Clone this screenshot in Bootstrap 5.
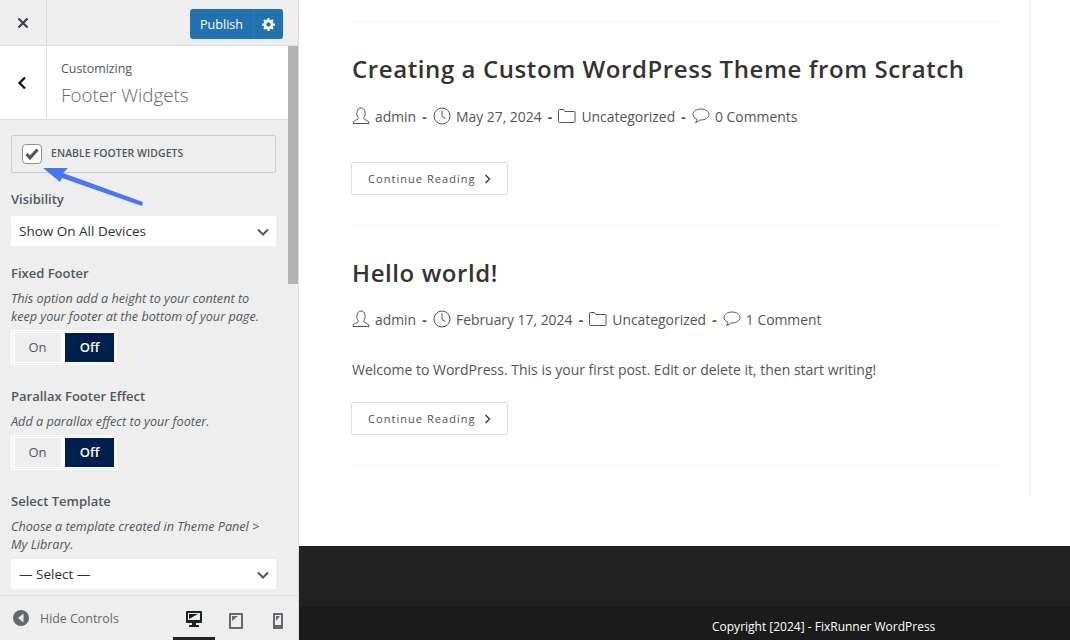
<!DOCTYPE html>
<html lang="en"><head><meta charset="utf-8"><title>Customizer</title>
<link href="https://cdn.jsdelivr.net/npm/bootstrap@5.3.0/dist/css/bootstrap.min.css" rel="stylesheet">
<style>
html,body{height:640px;overflow:hidden;background:#fff;font-family:"Open Sans",sans-serif}
.app{height:640px}
.side{width:299px;flex:none;background:#eee;border-right:1px solid #ddd;color:#50575e;position:relative}
.top{height:46px;border-bottom:1px solid #ddd}
.close-x{width:47px;border-right:1px solid #ddd;color:#3c434a}
.pub{margin:9px 15px 0 0;width:93px;height:30px;background:#2271b1;border-radius:3px;color:#fff;font-size:12.6px}
.pub span{flex:1;text-align:center;padding:2px 0 0 0}
.pub i{width:30px;display:flex;align-items:center;justify-content:center;border-left:1px solid #2a78b8;padding-right:1px}
.info{height:74px;background:#fff;border-bottom:1px solid #ddd;margin-right:10px}
.back{width:47px;border-right:1px solid #ddd;padding-right:2px}
.info .tx{padding-left:14px}
.info small{display:block;font-size:12.4px;color:#50575e;line-height:18px;margin-top:14px}
.info h2{font-size:18.8px;font-weight:300;color:#646970;line-height:27px;margin:4px 0 0}
.scroll{height:475px;overflow:hidden}
.thumb{width:10px;height:238px;background:#b3b3b3;position:absolute;right:0;top:46px}
.pane{width:265px;margin-left:11px;padding-top:15px}
.chk{height:38px;border:1px solid #ccc;border-radius:2px;padding-left:10px;font-size:10.4px;font-weight:600;letter-spacing:.1px;color:#50575e}
.box{width:20px;height:20px;border:1px solid #8c8f94;border-radius:4px;background:#fff;margin-right:9px}
.lbl{font-size:13px;font-weight:600;line-height:18px;color:#50575e}
.lv{margin-top:17px}.lf{margin-top:18px}.lp{margin-top:22px}
.desc{font-size:12.65px;font-style:italic;line-height:18px;color:#50575e;margin-top:7px}
.sel{height:30px;background:#fff;font-size:13.5px;color:#2c3338;padding:1px 7px 0 8px;margin-top:8px}
.sel.s2{margin-top:6px}
.tog{width:106px;height:35px;background:#fff;padding:3px 3px 3px 4px;margin-top:5px;font-size:13px;gap:4px;outline:1px dotted #e4e4e4;outline-offset:-2px}
.tog div{display:flex;align-items:center;justify-content:center}
.tog .on{background:#eee;color:#50575e;width:46px;padding-right:1px}
.tog .off{background:#001f4d;color:#fff;font-weight:600;width:49px}
.foot{height:45px;border-top:1px solid #ddd;font-size:12.4px;color:#646970;background:#eee}
.hide{margin-left:13px}.hide+span{margin-left:11px;padding-top:2px}
.dev{width:42px;height:44px;padding-top:5px}
.dev.act{border-bottom:3px solid #1d2327}
.devs{margin-right:-1px}
.arrow{position:absolute;left:38px;top:160px}
.main{flex:1;min-width:0}
.wrap{height:496px;width:732px;border-right:1px solid #f1f1f1;padding-left:52px}
.list{width:649px;padding-top:21px}
article{border-top:1px solid #f1f1f1}
article h3{font-size:24px;font-weight:600;color:#333;letter-spacing:.59px;line-height:34px;margin:0;padding-left:1px}
.meta{font-size:13.9px;color:#555;gap:5px;height:20px;margin-top:21px;padding-left:1px}
.a2 .meta{margin-top:20px}
.meta svg{margin-bottom:3px}
.meta b{font-weight:700;color:#555;margin:0 1.2px}
.rd{width:157px;height:33px;border:1px solid #ddd;border-radius:2px;font-size:11px;letter-spacing:1.05px;color:#555;padding:1px 0 0 16px;gap:8px}
.a1{padding-top:30px;height:204px}
.a2{padding-top:30px;height:241px;border-bottom:1px solid #f1f1f1}
.a1 .rd{margin-top:35px}
.txt{font-size:14px;color:#555;line-height:20px;margin:30px 0 0;padding-left:1px}
.a2 .rd{margin-top:22px}
.fw{height:60px;background:#222;margin-top:50px}
.fc{height:34px;background:#1b1b1b;color:#fff;font-size:12px;padding-left:413px;line-height:41px;font-weight:500}
</style></head><body>
<div class="app d-flex">
<aside class="side d-flex flex-column">
 <div class="top d-flex justify-content-between">
  <div class="close-x d-flex align-items-center justify-content-center"><svg width="12" height="12" viewBox="0 0 12 12"><path d="M1.500 1.500l9 9M10.500 1.500l-9 9" stroke="currentColor" stroke-width="2.200"/></svg></div>
  <div class="pub d-flex align-items-stretch"><span class="align-self-center">Publish</span><i><svg width="15" height="15" viewBox="-.5 .5 20 20"><path fill="#fff" d="M18 12h-2.180c-.17.7-.44 1.350-.81 1.930l1.540 1.540-2.100 2.100-1.540-1.540c-.58.360-1.230.630-1.910.790V19H8v-2.180c-.68-.16-1.330-.43-1.910-.79l-1.540 1.540-2.120-2.120 1.540-1.540c-.36-.58-.63-1.230-.79-1.910H1V9.030h2.170c.16-.7.440-1.350.8-1.940L2.430 5.550l2.100-2.100 1.540 1.540c.58-.37 1.240-.64 1.930-.81V2h3v2.180c.68.160 1.330.430 1.910.790l1.540-1.540 2.120 2.120-1.540 1.540c.36.590.64 1.240.8 1.940H18V12zm-8.500 1.500c1.660 0 3-1.340 3-3s-1.340-3-3-3-3 1.340-3 3 1.340 3 3 3z"/></svg></i></div>
 </div>
 <div class="info d-flex">
  <div class="back d-flex align-items-center justify-content-center"><svg width="10" height="14" viewBox="0 0 10 14"><path d="M8 1.500L2.500 7 8 12.500" fill="none" stroke="#111" stroke-width="2.300"/></svg></div>
  <div class="tx"><small>Customizing</small><h2>Footer Widgets</h2></div>
 </div>
 <div class="thumb"></div>
 <div class="scroll"><div class="pane">
  <div class="chk d-flex align-items-center"><div class="box d-flex align-items-center justify-content-center"><svg width="14" height="12" viewBox="0 0 14 12"><path d="M1.500 6l3.500 3.800 7.500-8.300" fill="none" stroke="#50575e" stroke-width="3.200"/></svg></div>ENABLE FOOTER WIDGETS</div>
  <div class="lbl lv">Visibility</div>
  <div class="sel d-flex align-items-center justify-content-between">Show On All Devices<svg width="12" height="8" viewBox="0 0 12 8"><path d="M1 1.500l5 5 5-5" fill="none" stroke="#50575e" stroke-width="2"/></svg></div>
  <div class="lbl lf">Fixed Footer</div>
  <div class="desc">This option add a height to your content to keep your footer at the bottom of your page.</div>
  <div class="tog d-flex"><div class="on">On</div><div class="off">Off</div></div>
  <div class="lbl lp">Parallax Footer Effect</div>
  <div class="desc">Add a parallax effect to your footer.</div>
  <div class="tog d-flex"><div class="on">On</div><div class="off">Off</div></div>
  <div class="lbl lp">Select Template</div>
  <div class="desc">Choose a template created in Theme Panel &gt; My Library.</div>
  <div class="sel s2 d-flex align-items-center justify-content-between">— Select —<svg width="12" height="8" viewBox="0 0 12 8"><path d="M1 1.500l5 5 5-5" fill="none" stroke="#50575e" stroke-width="2"/></svg></div>
 </div></div>
 <div class="foot d-flex align-items-center">
  <svg class="hide" width="16" height="16" viewBox="0 0 16 16"><circle cx="8" cy="8" r="8" fill="#646970"/><path d="M10.500 3.500v9L5 8z" fill="#eee"/></svg>
  <span>Hide Controls</span>
  <div class="d-flex ms-auto devs">
   <div class="dev act d-flex align-items-center justify-content-center"><svg width="20" height="20" viewBox="0 0 20 20"><path fill="#1d2327" d="M3 2h14c.55 0 1 .45 1 1v10c0 .55-.45 1-1 1h-5v2h2c.55 0 1 .45 1 1v1H5v-1c0-.55.45-1 1-1h2v-2H3c-.55 0-1-.45-1-1V3c0-.55.45-1 1-1zm13 9V4H4v7h12zM5 5h9L5 10V5z"/></svg></div>
   <div class="dev d-flex align-items-center justify-content-center"><svg width="20" height="20" viewBox="0 0 20 20"><path fill="#646970" d="M4 2h12c.55 0 1 .45 1 1v14c0 .55-.45 1-1 1H4c-.55 0-1-.45-1-1V3c0-.55.45-1 1-1zm11 14V4H5v12h10zM6 5h6l-6 5V5z"/></svg></div>
   <div class="dev d-flex align-items-center justify-content-center"><svg width="20" height="20" viewBox="0 0 20 20"><path fill="#646970" d="M6 2h8c.55 0 1 .45 1 1v14c0 .55-.45 1-1 1H6c-.55 0-1-.45-1-1V3c0-.55.45-1 1-1zm7 12V4H7v10h6zM8 5h4l-4 5V5z"/></svg></div>
  </div>
 </div>
 <svg class="arrow" width="110" height="50" viewBox="0 0 110 50"><path d="M5 8L30 8 25 13 105 42 104 46 24 18 22 22z" fill="#4a76f5"/></svg>
</aside>
<main class="main">
 <div class="wrap"><div class="list">
  <article class="a1"><h3>Creating a Custom WordPress Theme from Scratch</h3>
   <div class="meta d-flex align-items-center">
    <svg width="18" height="18" viewBox="0 0 18 18"><path d="M1 16.500c0-2.500 2-3 4-3.800 1.200-.5 1.500-1.300 1-2.200C5 9 4.600 7.500 5 5c.4-2.500 2-4 4-4s3.600 1.500 4 4c.4 2.500 0 4-1 5.500-.5.900-.2 1.700 1 2.200 2 .800 4 1.300 4 3.800z" fill="none" stroke="#555"/></svg><span>admin</span><b>-</b>
    <svg width="18" height="18" viewBox="0 0 18 18"><circle cx="9" cy="9" r="8" fill="none" stroke="#555"/><path d="M9 3.500V9.500l3.500 2" fill="none" stroke="#555"/></svg><span>May 27, 2024</span><b>-</b>
    <svg width="18" height="14" viewBox="0 0 18 14"><path d="M.5 12V1.500a1 1 0 011-1h4l1.500 2h9.500a.5.500 0 01.500.500v9.500a1 1 0 01-1 1h-14.500a1 1 0 01-1-1z" fill="none" stroke="#555"/></svg><span>Uncategorized</span><b>-</b>
    <svg width="18" height="16" viewBox="0 0 18 16"><path d="M9 1c4.500 0 8 2.400 8 5.500S13.500 12 9 12l-1-.1C7 13 5.500 14 3.500 14.500c1-1 1.400-2 1.300-3.300C2.500 10.200 1 8.500 1 6.500 1 3.400 4.500 1 9 1z" fill="none" stroke="#555"/></svg><span>0 Comments</span>
   </div>
   <div class="rd d-flex align-items-center">Continue Reading<svg width="7" height="10" viewBox="0 0 7 10"><path d="M1.500 1l4 4-4 4" fill="none" stroke="#333" stroke-width="1.300"/></svg></div>
  </article>
  <article class="a2"><h3>Hello world!</h3>
   <div class="meta d-flex align-items-center">
    <svg width="18" height="18" viewBox="0 0 18 18"><path d="M1 16.500c0-2.500 2-3 4-3.800 1.200-.5 1.500-1.300 1-2.200C5 9 4.600 7.500 5 5c.4-2.500 2-4 4-4s3.600 1.500 4 4c.4 2.500 0 4-1 5.500-.5.900-.2 1.700 1 2.200 2 .800 4 1.300 4 3.800z" fill="none" stroke="#555"/></svg><span>admin</span><b>-</b>
    <svg width="18" height="18" viewBox="0 0 18 18"><circle cx="9" cy="9" r="8" fill="none" stroke="#555"/><path d="M9 3.500V9.500l3.500 2" fill="none" stroke="#555"/></svg><span>February 17, 2024</span><b>-</b>
    <svg width="18" height="14" viewBox="0 0 18 14"><path d="M.5 12V1.500a1 1 0 011-1h4l1.500 2h9.500a.5.500 0 01.500.500v9.500a1 1 0 01-1 1h-14.500a1 1 0 01-1-1z" fill="none" stroke="#555"/></svg><span>Uncategorized</span><b>-</b>
    <svg width="18" height="16" viewBox="0 0 18 16"><path d="M9 1c4.500 0 8 2.400 8 5.500S13.500 12 9 12l-1-.1C7 13 5.500 14 3.500 14.500c1-1 1.400-2 1.300-3.300C2.500 10.200 1 8.500 1 6.500 1 3.400 4.500 1 9 1z" fill="none" stroke="#555"/></svg><span>1 Comment</span>
   </div>
   <p class="txt">Welcome to WordPress. This is your first post. Edit or delete it, then start writing!</p>
   <div class="rd d-flex align-items-center">Continue Reading<svg width="7" height="10" viewBox="0 0 7 10"><path d="M1.500 1l4 4-4 4" fill="none" stroke="#333" stroke-width="1.300"/></svg></div>
  </article>
 </div></div>
 <div class="fw"></div>
 <div class="fc">Copyright [2024] - FixRunner WordPress</div>
</main>
</div>
</body></html>
